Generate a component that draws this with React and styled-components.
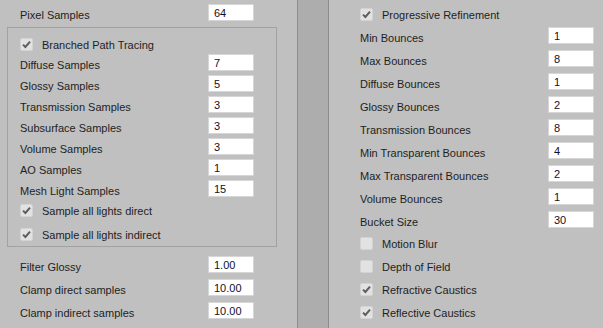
import React from "react";
import styled, { createGlobalStyle } from "styled-components";

const GlobalStyle = createGlobalStyle`
  html, body {
    margin: 0;
    padding: 0;
    background: #c0c0c0;
  }
  body {
    font-family: "Liberation Sans", Arial, sans-serif;
    font-size: 11px;
    color: #1e1e1e;
  }
`;

const leftTop = [
  { label: "Pixel Samples", value: "64" },
];

const groupRows = [
  { label: "Diffuse Samples", value: "7" },
  { label: "Glossy Samples", value: "5" },
  { label: "Transmission Samples", value: "3" },
  { label: "Subsurface Samples", value: "3" },
  { label: "Volume Samples", value: "3" },
  { label: "AO Samples", value: "1" },
  { label: "Mesh Light Samples", value: "15" },
];

const leftBottom = [
  { label: "Filter Glossy", value: "1.00" },
  { label: "Clamp direct samples", value: "10.00" },
  { label: "Clamp indirect samples", value: "10.00" },
];

const rightRows = [
  { label: "Min Bounces", value: "1" },
  { label: "Max Bounces", value: "8" },
  { label: "Diffuse Bounces", value: "1" },
  { label: "Glossy Bounces", value: "2" },
  { label: "Transmission Bounces", value: "8" },
  { label: "Min Transparent Bounces", value: "4" },
  { label: "Max Transparent Bounces", value: "2" },
  { label: "Volume Bounces", value: "1" },
  { label: "Bucket Size", value: "30" },
];

const rightChecks = [
  { label: "Motion Blur", checked: false },
  { label: "Depth of Field", checked: false },
  { label: "Refractive Caustics", checked: true },
  { label: "Reflective Caustics", checked: true },
];

const Page = styled.div`
  display: flex;
  width: 603px;
  height: 328px;
  overflow: hidden;
`;

const LeftPane = styled.div`
  width: 297px;
  padding-top: 4px;
  display: flex;
  flex-direction: column;
`;

const Gutter = styled.div`
  width: 30px;
  background: #adadad;
  border-left: 1px solid #8b8b8b;
  border-right: 1px solid #8b8b8b;
`;

const RightPane = styled.div`
  flex: 1;
  padding-top: 6px;
  display: flex;
  flex-direction: column;
`;

const Stack = styled.div`
  display: flex;
  flex-direction: column;
  gap: ${(p) => p.$gap}px;
  margin-top: ${(p) => p.$top || 0}px;
  padding-left: ${(p) => p.$indent || 0}px;
`;

const Group = styled.div`
  margin: 6px 0 0 7px;
  width: 256px;
  border: 1px solid #a2a2a2;
  padding: 8px 0 3px 12px;
  display: flex;
  flex-direction: column;
`;

const Row = styled.div`
  display: flex;
  align-items: flex-start;
  height: 17px;
`;

const Label = styled.span`
  width: 188px;
  margin-top: 4px;
  line-height: 14px;
  white-space: nowrap;
`;

const Field = styled.input`
  box-sizing: border-box;
  width: 46px;
  height: 17px;
  margin: 0;
  padding: 0 0 0 5px;
  border: 1px solid #d6d6d6;
  background: #fff;
  font-family: "Liberation Sans", Arial, sans-serif;
  font-size: 11px;
  color: #10102a;
  outline: none;
`;

const CheckRow = styled.div`
  display: flex;
  align-items: center;
  height: 17px;
  margin-top: ${(p) => p.$top || 0}px;
`;

const Box = styled.span`
  box-sizing: border-box;
  width: 13px;
  height: 13px;
  border-radius: 2px;
  background: #e2e2e2;
  border: 1px solid #d3d3d3;
  display: flex;
  align-items: center;
  justify-content: center;
  margin-right: 9px;
`;

const CheckText = styled.span`
  line-height: 14px;
  white-space: nowrap;
`;

const Check = ({ label, checked, top }) => (
  <CheckRow $top={top}>
    <Box>
      {checked && (
        <svg width="11" height="11" viewBox="0 0 11 11">
          <path d="M2 5.6 L4.4 8 L9 2.6" fill="none" stroke="#5e5e5e" strokeWidth="2" />
        </svg>
      )}
    </Box>
    <CheckText>{label}</CheckText>
  </CheckRow>
);

const FieldRow = ({ label, value }) => (
  <Row>
    <Label>{label}</Label>
    <Field defaultValue={value} />
  </Row>
);

export default function App() {
  return (
    <>
      <GlobalStyle />
      <Page>
        <LeftPane>
          <Stack $gap={0} $indent={20}>
            {leftTop.map((r) => (
              <FieldRow key={r.label} {...r} />
            ))}
          </Stack>
          <Group>
            <Check label="Branched Path Tracing" checked />
            <Stack $gap={4} $top={1}>
              {groupRows.map((r) => (
                <FieldRow key={r.label} {...r} />
              ))}
            </Stack>
            <Check label="Sample all lights direct" checked top={5} />
            <Check label="Sample all lights indirect" checked top={7} />
          </Group>
          <Stack $gap={6} $top={9} $indent={20}>
            {leftBottom.map((r) => (
              <FieldRow key={r.label} {...r} />
            ))}
          </Stack>
        </LeftPane>
        <Gutter />
        <RightPane>
          <Stack $gap={0} $indent={31}>
            <Check label="Progressive Refinement" checked />
            <Stack $gap={6} $top={4}>
              {rightRows.map((r) => (
                <FieldRow key={r.label} {...r} />
              ))}
            </Stack>
            <Check label={rightChecks[0].label} checked={rightChecks[0].checked} top={7} />
            {rightChecks.slice(1).map((c) => (
              <Check key={c.label} label={c.label} checked={c.checked} top={6} />
            ))}
          </Stack>
        </RightPane>
      </Page>
    </>
  );
}
